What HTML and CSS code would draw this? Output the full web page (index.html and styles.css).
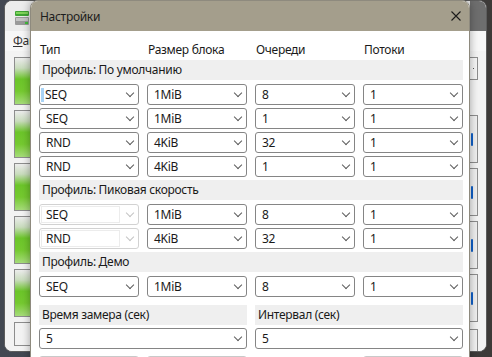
FILE: index.html
```html
<!DOCTYPE html>
<html lang="ru">
<head>
<meta charset="UTF-8">
<meta name="viewport" content="width=device-width, initial-scale=1.0">
<title>Настройки</title>
<link rel="stylesheet" href="styles.css">
</head>
<body>
<div class="desktop">

    <!-- main app window behind the dialog -->
    <div class="app-window">
        <div class="app-toolbar">
            <svg class="app-icon" width="16" height="16" viewBox="0 0 16 16">
                <rect x="1" y="1" width="14" height="5" rx="1" fill="#3fa535"/>
                <rect x="2" y="2" width="12" height="2" fill="#7fd35a"/>
                <rect x="1" y="7" width="14" height="8" rx="1" fill="#9a9a9a"/>
                <rect x="2" y="8" width="12" height="3" fill="#c4c4c4"/>
                <rect x="11" y="12" width="3" height="2" fill="#3fc03a"/>
            </svg>
            <div class="app-caption-buttons"></div>
        </div>
        <div class="app-menu"><span><u>Ф</u>айл</span></div>
        <div class="app-main">
            <div class="tiles tiles-left">
                <div class="tile green"></div>
                <div class="tile green"></div>
                <div class="tile green"></div>
                <div class="tile green"></div>
                <div class="tile green"></div>
                <div class="tile small"></div>
            </div>
            <div class="tiles tiles-right">
                <div class="tile mini"><span class="dot"></span></div>
                <div class="tile plain"><span class="blue-bar"></span></div>
                <div class="tile plain"><span class="blue-bar"></span></div>
                <div class="tile plain"><span class="blue-bar"></span></div>
                <div class="tile plain"><span class="blue-bar"></span></div>
                <div class="tile small"></div>
            </div>
        </div>
    </div>

    <!-- settings dialog -->
    <div class="dialog">
        <div class="dialog-title">
            <span>Настройки</span>
            <svg class="close-icon" width="10" height="10" viewBox="0 0 10 10">
                <path d="M0.5 0.5 L9.5 9.5 M9.5 0.5 L0.5 9.5" stroke="#1c1c1c" stroke-width="1.1"/>
            </svg>
        </div>
        <div class="dialog-body">
            <div class="grid head-row">
                <div>Тип</div>
                <div>Размер блока</div>
                <div>Очереди</div>
                <div>Потоки</div>
            </div>

            <div class="band">Профиль: По умолчанию</div>
            <div class="grid combos">
                <div class="combo"><span><span class="focus-mark"></span>SEQ</span></div>
                <div class="combo"><span>1MiB</span></div>
                <div class="combo"><span>8</span></div>
                <div class="combo"><span>1</span></div>

                <div class="combo"><span>SEQ</span></div>
                <div class="combo"><span>1MiB</span></div>
                <div class="combo"><span>1</span></div>
                <div class="combo"><span>1</span></div>

                <div class="combo"><span>RND</span></div>
                <div class="combo"><span>4KiB</span></div>
                <div class="combo"><span>32</span></div>
                <div class="combo"><span>1</span></div>

                <div class="combo"><span>RND</span></div>
                <div class="combo"><span>4KiB</span></div>
                <div class="combo"><span>1</span></div>
                <div class="combo"><span>1</span></div>
            </div>

            <div class="band">Профиль: Пиковая скорость</div>
            <div class="grid combos">
                <div class="combo disabled"><span class="combo-text">SEQ</span></div>
                <div class="combo"><span>1MiB</span></div>
                <div class="combo"><span>8</span></div>
                <div class="combo"><span>1</span></div>

                <div class="combo disabled"><span class="combo-text">RND</span></div>
                <div class="combo"><span>4KiB</span></div>
                <div class="combo"><span>32</span></div>
                <div class="combo"><span>1</span></div>
            </div>

            <div class="band">Профиль: Демо</div>
            <div class="grid combos">
                <div class="combo"><span>SEQ</span></div>
                <div class="combo"><span>1MiB</span></div>
                <div class="combo"><span>8</span></div>
                <div class="combo"><span>1</span></div>
            </div>

            <div class="timing">
                <div class="timing-col">
                    <div class="band">Время замера (сек)</div>
                    <div class="combo"><span>5</span></div>
                </div>
                <div class="timing-col">
                    <div class="band">Интервал (сек)</div>
                    <div class="combo"><span>5</span></div>
                </div>
            </div>

            <div class="grid buttons">
                <div class="btn"></div>
                <div class="btn"></div>
                <div></div>
                <div class="btn"></div>
            </div>
        </div>
    </div>

</div>
</body>
</html>
```

FILE: styles.css
```css
html, body {
    margin: 0;
    padding: 0;
}

body {
    font-family: "Noto Sans", "Open Sans", sans-serif;
    font-size: 12px;
    letter-spacing: -0.3px;
    color: #1a1a1a;
    background-color: #3c414c;
}

.desktop {
    position: relative;
    width: 492px;
    height: 357px;
    overflow: hidden;
    background: linear-gradient(90deg, #434852 0%, #3a3f4a 60%, #3d3a38 100%);
}

/* ---------- background window ---------- */

.app-window {
    position: absolute;
    left: 4px;
    top: 0;
    width: 483px;
    height: 352px;
    box-sizing: border-box;
    background-color: #f3f3f3;
    border: 1px solid #5d5d5d;
    border-radius: 8px;
    overflow: hidden;
}

.app-toolbar {
    height: 30px;
    display: flex;
    align-items: flex-start;
    justify-content: space-between;
    background-color: #ececec;
}

.app-icon {
    margin: 9px 0 0 9px;
}

.app-caption-buttons {
    width: 16px;
    height: 30px;
    background-color: #6e6e6e;
}

.app-menu {
    height: 20px;
    line-height: 20px;
    padding-left: 8px;
    background-color: #f7f7f7;
    color: #333;
}

.app-main {
    display: flex;
    justify-content: space-between;
    padding: 6px 8px 0 9px;
    background-color: #f3f3f3;
    height: 300px;
}

.tiles {
    display: flex;
    flex-direction: column;
    gap: 5px;
}

.tiles-left {
    width: 60px;
}

.tiles-right {
    width: 30px;
}

.tile {
    box-sizing: border-box;
    border: 1px solid #8d8d8d;
    height: 48px;
    position: relative;
}

.tile.green {
    background: linear-gradient(180deg, #ececec 0%, #c9dcbd 22%, #6cc52a 46%, #75c930 72%, #a6dc7a 100%);
}

.tile.plain {
    background-color: #f0f0f0;
    display: flex;
    align-items: center;
}

.tile.small {
    height: 24px;
    background-color: #f3f3f3;
}

.tile.mini {
    height: 23px;
    margin-bottom: 30px;
    background-color: #f6f6f6;
    display: flex;
    align-items: center;
    justify-content: flex-end;
}

.tiles-right .tile.small {
    margin-top: 2px;
}

.dot {
    width: 1px;
    height: 1px;
    margin-right: 3px;
    background-color: #555;
}

.blue-bar {
    width: 2px;
    height: 13px;
    margin-left: 22px;
    background-color: #1060c8;
    border-radius: 1px;
}

/* ---------- dialog ---------- */

.dialog {
    position: absolute;
    left: 30px;
    top: 0;
    width: 440px;
    height: 380px;
    box-sizing: border-box;
    background-color: #ffffff;
    border: 1px solid #8e8a7e;
    border-radius: 8px 8px 0 0;
    overflow: hidden;
    box-shadow: 0 0 8px rgba(0, 0, 0, 0.35);
}

.dialog-title {
    height: 30px;
    box-sizing: border-box;
    display: flex;
    align-items: center;
    justify-content: space-between;
    padding: 0 8px 0 9px;
    background-color: #a49e8c;
    color: #1c1c1c;
}

.dialog-body {
    padding: 10px 6px 0 8px;
}

.grid {
    display: grid;
    grid-template-columns: repeat(4, 100px);
    column-gap: 8px;
}

.head-row {
    height: 18px;
    line-height: 18px;
    padding-left: 1px;
}

.band {
    height: 20px;
    line-height: 20px;
    padding-left: 3px;
    margin-top: 1px;
    background-color: #efefef;
}

.combos {
    row-gap: 3px;
    margin-top: 4px;
    margin-bottom: 3px;
}

.combo {
    height: 21px;
    box-sizing: border-box;
    display: flex;
    align-items: center;
    justify-content: space-between;
    padding: 0 5px 0 6px;
    background-color: #ffffff;
    border: 1px solid #858585;
    border-radius: 3px;
}

.combo::after {
    content: "";
    width: 5px;
    height: 5px;
    margin-top: -4px;
    border-right: 1px solid #5c5c5c;
    border-bottom: 1px solid #5c5c5c;
    transform: rotate(45deg);
}

.combo.disabled {
    border-color: #d2d2d2;
    padding-left: 1px;
}

.combo.disabled::after {
    border-color: #c4c4c4;
}

.combo-text {
    width: 73px;
    height: 15px;
    line-height: 15px;
    padding-left: 4px;
    border: 1px solid #ececec;
}

.focus-mark {
    display: inline-block;
    width: 3px;
    height: 14px;
    margin: 0 1px 0 -5px;
    vertical-align: -3px;
    background-color: #a9d3f5;
}

.timing {
    display: flex;
    gap: 8px;
    margin-top: 8px;
}

.timing-col {
    flex: 1;
}

.timing-col .band {
    margin-top: 0;
    margin-bottom: 3px;
}

.buttons {
    margin-top: 7px;
}

.btn {
    height: 22px;
    box-sizing: border-box;
    background-color: #f5f5f5;
    border: 1px solid #c9c9c9;
    border-radius: 3px;
}
```
